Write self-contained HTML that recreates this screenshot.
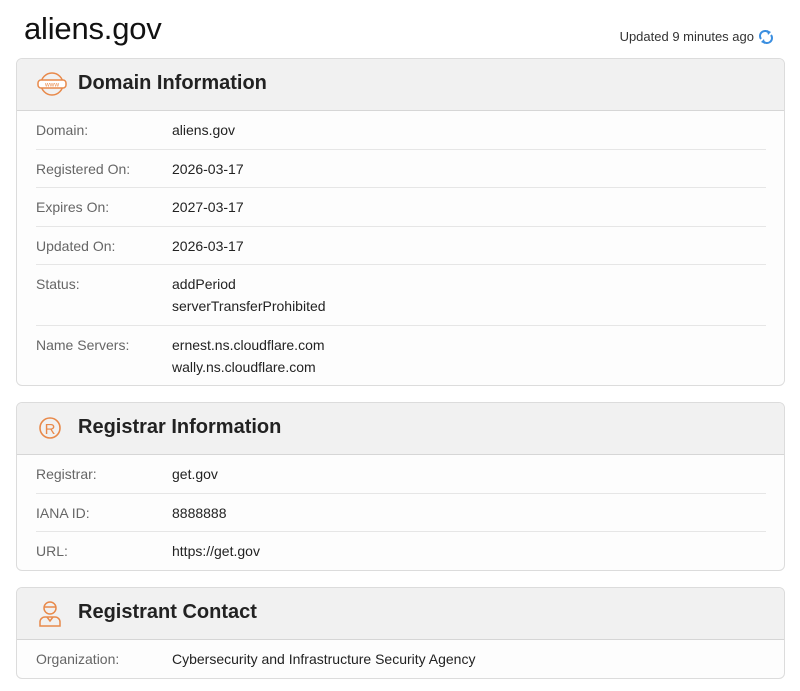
<!DOCTYPE html>
<html><head><meta charset="utf-8"><style>
body{margin:0;background:#fff;font-family:"Liberation Sans",sans-serif;width:800px;height:691px;position:relative;overflow:hidden}
h1{position:absolute;left:24px;top:11px;margin:0;font-size:31px;font-weight:normal;color:#111;letter-spacing:-0.2px}
.upd{position:absolute;right:46px;top:29px;font-size:13px;color:#333}
.upd svg{position:absolute;right:-20px;top:-1px}
.card{position:absolute;left:16px;width:767px;border:1px solid #dcdcdc;border-radius:6px;background:#fdfdfd;overflow:hidden}
.hd{height:51px;background:#f1f1f1;border-bottom:1px solid #d6d6d6;position:relative}
.hd span{position:absolute;left:61px;top:13px;font-size:20px;font-weight:bold;color:#222}
.hd svg{position:absolute;left:20px;top:12px}
.row{margin:0 18px 0 19px;border-bottom:1px solid #e6e6e6;display:flex;font-size:14px;line-height:22px;padding:8px 0 7.5px 0}
.row:last-child{border-bottom:none}
.l{width:136px;color:#666}
.v{color:#222}
</style></head><body>
<h1>aliens.gov</h1>
<div class="upd">Updated 9 minutes ago<svg width="16" height="18" viewBox="0 0 16 18"><path d="M3 11a5 5 0 0 1 8-6" stroke="#3a8ee0" stroke-width="2" fill="none"/><path d="M9 2l4 2-3 3z" fill="#3a8ee0"/><path d="M13 7a5 5 0 0 1-8 6" stroke="#3a8ee0" stroke-width="2" fill="none"/><path d="M7 16l-4-2 3-3z" fill="#3a8ee0"/></svg></div>

<div class="card" style="top:58px;height:326px">
<div class="hd"><svg width="30" height="26" viewBox="0 0 30 26"><circle cx="15" cy="13" r="11" fill="none" stroke="#e8894a" stroke-width="1.5"/><rect x="1" y="9" width="28" height="8" rx="3" fill="#fff" stroke="#e8894a" stroke-width="1.5"/><text x="15" y="15.5" font-size="6.5" text-anchor="middle" fill="#e8894a" font-family="Liberation Sans">www</text></svg><span>Domain Information</span></div>
<div class="row"><div class="l">Domain:</div><div class="v">aliens.gov</div></div>
<div class="row"><div class="l">Registered On:</div><div class="v">2026-03-17</div></div>
<div class="row"><div class="l">Expires On:</div><div class="v">2027-03-17</div></div>
<div class="row"><div class="l">Updated On:</div><div class="v">2026-03-17</div></div>
<div class="row"><div class="l">Status:</div><div class="v">addPeriod<br>serverTransferProhibited</div></div>
<div class="row"><div class="l">Name Servers:</div><div class="v">ernest.ns.cloudflare.com<br>wally.ns.cloudflare.com</div></div>
</div>

<div class="card" style="top:402px;height:167px">
<div class="hd"><svg width="26" height="26" viewBox="0 0 26 26"><circle cx="13" cy="13" r="10" fill="none" stroke="#e8894a" stroke-width="1.6"/><text x="13" y="19" font-size="15" text-anchor="middle" fill="#e8894a" font-family="Liberation Sans">R</text></svg><span>Registrar Information</span></div>
<div class="row"><div class="l">Registrar:</div><div class="v">get.gov</div></div>
<div class="row"><div class="l">IANA ID:</div><div class="v">8888888</div></div>
<div class="row"><div class="l">URL:</div><div class="v">https://get.gov</div></div>
</div>

<div class="card" style="top:587px;height:90px">
<div class="hd"><svg width="26" height="28" viewBox="0 0 26 28"><circle cx="13" cy="8" r="6" fill="none" stroke="#e8894a" stroke-width="1.5"/><path d="M7 7h12" stroke="#e8894a" stroke-width="1.5"/><path d="M3 26v-4a5 5 0 0 1 5-5h10a5 5 0 0 1 5 5v4z" fill="none" stroke="#e8894a" stroke-width="1.5"/><path d="M10 17l3 4 3-4" fill="none" stroke="#e8894a" stroke-width="1.5"/></svg><span>Registrant Contact</span></div>
<div class="row"><div class="l">Organization:</div><div class="v">Cybersecurity and Infrastructure Security Agency</div></div>
</div>
</body></html>
